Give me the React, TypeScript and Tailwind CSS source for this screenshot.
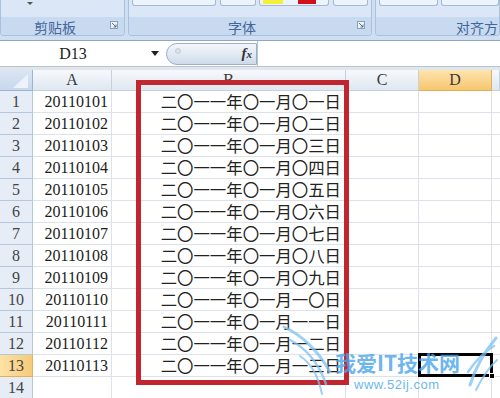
import React from 'react';

const days = ['〇一', '〇二', '〇三', '〇四', '〇五', '〇六', '〇七', '〇八', '〇九', '一〇', '一一', '一二', '一三'];

const rows = days.map((d, i) => ({
  n: i + 1,
  num: `201101${String(i + 1).padStart(2, '0')}`,
  text: `二〇一一年〇一月${d}日`,
}));

const serif = { fontFamily: '"Liberation Serif", "Noto Sans CJK SC", serif' };
const cjk = { fontFamily: '"Noto Sans CJK SC", "Liberation Sans", sans-serif' };

const Launcher = () => (
  <svg width="8" height="8" viewBox="0 0 8 8" className="absolute right-[6px] top-[4px]">
    <rect x="0.5" y="0.5" width="7" height="7" fill="#eef3f9" stroke="#8aa0bb" />
    <path d="M2 2 L6 6 M6 3.5 V6 H3.5" stroke="#5c6f88" strokeWidth="1" fill="none" />
  </svg>
);

const Btn = ({ w, ml, children }: any) => (
  <div
    className="relative h-[6px] rounded-b-[3px] border border-t-0 border-[#a3b9d4] bg-[#edf3fa]"
    style={{ width: w, marginLeft: ml }}
  >
    {children}
  </div>
);

const RibbonGroup = ({ w, label, launcher = true, top, labelClass = 'justify-center' }: any) => (
  <div
    className="flex h-[36px] shrink-0 flex-col overflow-hidden rounded-b-[4px] border border-t-0 border-[#a9c1de] bg-[#dbe7f6]"
    style={{ width: w }}
  >
    <div className="flex h-[17px] items-start">{top}</div>
    <div className={`relative flex h-[19px] items-center bg-[#c8daf0] pt-[2px] ${labelClass}`}>
      <span className="text-[14px] leading-none text-[#43659a]" style={cjk}>
        {label}
      </span>
      {launcher && <Launcher />}
    </div>
  </div>
);

const HeaderCell = ({ label, active = false }: any) => (
  <div
    className={`flex items-center justify-center border-r border-b text-[16px] text-[#3a3a3a] ${
      active
        ? 'border-[#e0b05a] bg-gradient-to-b from-[#fde4ae] to-[#f6c66e]'
        : 'border-[#c6d1de] bg-gradient-to-b from-[#f7f9fc] to-[#dfe7f1]'
    }`}
    style={serif}
  >
    {label}
  </div>
);

export default function App() {
  return (
    <div className="relative h-[398px] w-[500px] overflow-hidden bg-white">
      {/* ribbon */}
      <div className="flex h-[41px] items-start gap-[3px] overflow-hidden border-b border-[#8ea7c6] bg-[#cfdef1]">
        <RibbonGroup
          w={125}
          label="剪贴板"
          labelClass="justify-start pl-[33px]"
          top={
            <svg width="6" height="4" viewBox="0 0 6 4" className="ml-[26px] mt-[2px]">
              <path d="M0 0 H6 L3 3 Z" fill="#555" />
            </svg>
          }
        />
        <RibbonGroup
          w={244}
          label="字体"
          labelClass="justify-start pl-[99px]"
          top={
            <>
              <Btn w={84} ml={3} />
              <Btn w={36} ml={4} />
              <Btn w={70} ml={3}>
                <div className="absolute left-[3px] top-0 h-[4px] w-[20px] bg-[#f4f03a]" />
                <div className="absolute left-[38px] top-0 h-[4px] w-[18px] bg-[#d0101b]" />
              </Btn>
              <Btn w={35} ml={4} />
            </>
          }
        />
        <RibbonGroup
          w={125}
          label="对齐方"
          launcher={false}
          labelClass="justify-end pr-[1px]"
          top={
            <>
              <Btn w={74} ml={3} />
              <Btn w={74} ml={3} />
            </>
          }
        />
      </div>

      {/* formula bar */}
      <div className="flex h-[25px] items-center bg-white">
        <div className="flex h-full w-[160px] items-center">
          <div className="w-[146px] text-center text-[16px] text-[#222]" style={serif}>
            D13
          </div>
          <svg width="8" height="5" viewBox="0 0 8 5" className="ml-[5px]">
            <path d="M0 0 H8 L4 5 Z" fill="#222" />
          </svg>
        </div>
        <div className="relative ml-[6px] flex h-[22px] w-[91px] items-center justify-end rounded-l-full border border-[#9cb0c9] bg-gradient-to-b from-[#f4f7fb] to-[#cfdbea] pr-[4px]">
          <div className="absolute left-[8px] top-[4px] h-[6px] w-[6px] rounded-full border border-[#c3ccd7] bg-[#d9e2ec]" />
          <span className="text-[15px] font-bold italic text-[#333]" style={serif}>
            f<span className="text-[11px]">x</span>
          </span>
        </div>
        <div className="h-full flex-1 border-l border-[#b6c3d3] bg-white" />
      </div>
      <div className="h-[4px] border-t border-[#b8c4d2] bg-[#e1e6ed]" />

      {/* sheet */}
      <div className="grid grid-cols-[33px_79px_234px_73px_73px_1fr] grid-rows-[21px_repeat(14,22px)]">
        <div className="relative border-r border-b border-[#9fb4cc] bg-gradient-to-b from-[#dce6f3] to-[#c7d7ec]">
          <svg width="33" height="21" viewBox="0 0 33 21" className="absolute inset-0">
            <path d="M28 4 L28 18 L13 18 Z" fill="#eef3fa" />
          </svg>
        </div>
        <HeaderCell label="A" />
        <HeaderCell label="B" />
        <HeaderCell label="C" />
        <HeaderCell label="D" active />
        <HeaderCell label="" />

        {rows.map((r) => (
          <React.Fragment key={r.n}>
            <div
              className={`flex items-center justify-center border-r border-b text-[16px] text-[#444] ${
                r.n === 13
                  ? 'border-[#e0b05a] bg-gradient-to-r from-[#fde2a6] to-[#f7cb78]'
                  : 'border-[#b7c7da] bg-[#e6edf7]'
              }`}
              style={serif}
            >
              {r.n}
            </div>
            <div
              className="flex items-center justify-end border-r border-b border-[#dde2ea] pr-[3px] text-[16px] text-[#1c1c1c]"
              style={serif}
            >
              {r.num}
            </div>
            <div
              className="flex items-center justify-end border-r border-b border-[#dde2ea] pr-[4px] text-[16.4px] leading-none text-[#222]"
              style={cjk}
            >
              {r.text}
            </div>
            <div className="border-r border-b border-[#dde2ea]" />
            <div className="border-r border-b border-[#dde2ea]" />
            <div className="border-b border-[#dde2ea]" />
          </React.Fragment>
        ))}

        <div
          className="flex items-center justify-center border-r border-[#b7c7da] bg-[#e6edf7] text-[16px] text-[#444]"
          style={serif}
        >
          14
        </div>
        <div className="border-r border-[#dde2ea]" />
        <div className="border-r border-[#dde2ea]" />
        <div className="border-r border-[#dde2ea]" />
        <div className="border-r border-[#dde2ea]" />
        <div />
      </div>

      {/* red annotation box */}
      <div className="pointer-events-none absolute left-[136px] top-[80px] h-[305px] w-[213px] border-[5px] border-[#c1262e]" />

      {/* active cell D13 */}
      <div className="pointer-events-none absolute left-[418px] top-[353px] h-[24px] w-[75px] border-[3px] border-black" />
      <div className="pointer-events-none absolute left-[489px] top-[373px] h-[6px] w-[6px] border border-white bg-black" />

      {/* watermark */}
      <svg
        className="pointer-events-none absolute left-0 top-0"
        width="500"
        height="398"
        viewBox="0 0 500 398"
      >
        <g fill="none" stroke="#7cc2f2" strokeLinecap="round" opacity="0.75">
          <path d="M284 327 C300 334 318 350 330 372" strokeWidth="3" />
          <path d="M290 340 C306 348 318 362 326 384" strokeWidth="2.5" />
          <path d="M300 356 C312 364 318 376 322 394" strokeWidth="2" />
          <path d="M470 385 C476 366 486 350 496 338" strokeWidth="3" />
          <path d="M468 372 C476 360 484 352 494 346" strokeWidth="2.5" />
          <path d="M476 390 C482 378 488 368 497 360" strokeWidth="2" />
        </g>
      </svg>
      <div
        className="pointer-events-none absolute left-[335px] top-[352px] text-[21px] font-bold leading-none text-[#4aa5ea] opacity-80"
        style={cjk}
      >
        我爱IT技术网
      </div>
      <div
        className="pointer-events-none absolute left-[354px] top-[378px] text-[13px] leading-none tracking-[0.5px] text-[#6cb8ee]"
        style={{ fontFamily: '"Liberation Sans", sans-serif' }}
      >
        www.52ij.com
      </div>
    </div>
  );
}
